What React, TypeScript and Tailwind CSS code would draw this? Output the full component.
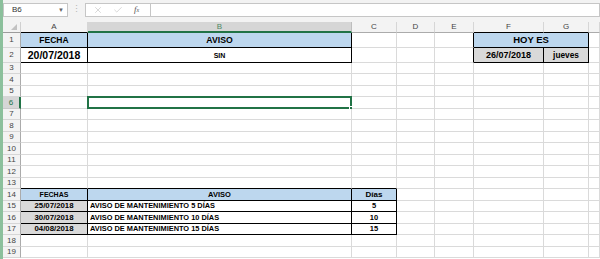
import { X, Check } from "lucide-react";

type CellData = { text: string; cls: string };

const COLS = ["A", "B", "C", "D", "E", "F", "G", "H"];
const ROWS = Array.from({ length: 19 }, (_, i) => i + 1);

const CELLS: Record<string, CellData> = {
  A1: { text: "FECHA", cls: "bg-[#bdd7ee] justify-center text-[8.5px]" },
  B1: { text: "AVISO", cls: "bg-[#bdd7ee] justify-center text-[8.7px]" },
  A2: { text: "20/07/2018", cls: "justify-center text-[10.5px]" },
  B2: { text: "SIN", cls: "justify-center text-[7px]" },
  F1: { text: "HOY ES", cls: "bg-[#bdd7ee] justify-center text-[9.5px]" },
  F2: { text: "26/07/2018", cls: "bg-[#d9d9d9] justify-center text-[9px]" },
  G2: { text: "jueves", cls: "bg-[#d9d9d9] justify-center text-[8.3px]" },
  A14: { text: "FECHAS", cls: "bg-[#bdd7ee] justify-center text-[7px]" },
  B14: { text: "AVISO", cls: "bg-[#bdd7ee] justify-center text-[7.5px]" },
  C14: { text: "Días", cls: "bg-[#bdd7ee] justify-center text-[8px]" },
  A15: { text: "25/07/2018", cls: "bg-[#d9d9d9] justify-center text-[7.8px]" },
  B15: { text: "AVISO DE MANTENIMIENTO 5 DÍAS", cls: "pl-[2px] text-[7.4px]" },
  C15: { text: "5", cls: "justify-center text-[7.5px]" },
  A16: { text: "30/07/2018", cls: "bg-[#d9d9d9] justify-center text-[7.8px]" },
  B16: { text: "AVISO DE MANTENIMIENTO 10 DÍAS", cls: "pl-[2px] text-[7.4px]" },
  C16: { text: "10", cls: "justify-center text-[7.5px]" },
  A17: { text: "04/08/2018", cls: "bg-[#d9d9d9] justify-center text-[7.8px]" },
  B17: { text: "AVISO DE MANTENIMIENTO 15 DÍAS", cls: "pl-[2px] text-[7.4px]" },
  C17: { text: "15", cls: "justify-center text-[7.5px]" },
};

// cells that carry black borders
function boxed(r: number, c: number) {
  if (r >= 1 && r <= 2 && c >= 0 && c <= 1) return true;
  if (r >= 1 && r <= 2 && c >= 5 && c <= 6) return true;
  if (r >= 14 && r <= 17 && c >= 0 && c <= 2) return true;
  return false;
}

function FormulaBar() {
  return (
    <div className="flex h-[22px] items-start gap-0 bg-[#f3f3f3] pt-[3px]">
      <div className="flex h-[14px] w-[65px] items-center justify-between border border-[#c6c6c6] bg-white pl-[8px] pr-[3px] text-[8px] text-[#333]">
        <span>B6</span>
        <span className="text-[6px] text-[#666]">▼</span>
      </div>
      <div className="flex h-[14px] w-[17px] items-center justify-center text-[9px] text-[#b5b5b5]">⋮</div>
      <div className="flex h-[14px] w-[65px] items-center border border-[#c6c6c6] border-r-0 bg-white pl-[6px] text-[#b0b0b0]">
        <X size={10} strokeWidth={1.2} className="ml-[1px]" />
        <Check size={10} strokeWidth={1.2} className="ml-[10px]" />
        <span className="ml-[11px] font-['Liberation_Serif',serif] text-[9px] italic text-[#555]">
          f<span className="text-[6px]">x</span>
        </span>
      </div>
      <div className="h-[14px] flex-1 border border-[#c6c6c6] bg-white" />
    </div>
  );
}

function ColumnHeaders() {
  return (
    <>
      <div className="flex items-end justify-end border-r border-b border-r-[#d0d0d0] border-b-[#9c9c9c] bg-[#f3f3f3] pr-[3px] pb-[2px]">
        <svg width="6" height="6" viewBox="0 0 6 6">
          <polygon points="6,0 6,6 0,6" fill="#c2c2c2" />
        </svg>
      </div>
      {COLS.map((col, c) =>
        c === 1 ? (
          <div
            key={col}
            className="flex items-center justify-center border-r border-b-2 border-r-[#bdbdbd] border-b-[#217346] bg-[#d6d6d6] text-[8px] text-[#4f8a64]"
          >
            {col}
          </div>
        ) : (
          <div
            key={col}
            className={
              "flex items-center justify-center border-r border-b border-r-[#d6d6d6] bg-[#f3f3f3] text-[8px] text-[#444] " +
              (boxed(1, c) ? "border-b-black" : "border-b-[#ababab]")
            }
          >
            {col === "H" ? "" : col}
          </div>
        )
      )}
    </>
  );
}

function SheetRow({ r }: { r: number }) {
  const selected = r === 6;
  return (
    <>
      <div
        className={
          selected
            ? "flex items-center justify-center border-r-2 border-b border-r-[#217346] border-b-[#c8c8c8] bg-[#d6d6d6] text-[8px] text-[#217346]"
            : "flex items-center justify-center border-r border-b border-r-[#ababab] border-b-[#d6d6d6] bg-[#f3f3f3] text-[8px] text-[#444]"
        }
      >
        {r}
      </div>
      {COLS.map((col, c) => {
        if (r === 1 && c === 6) return null;
        const merged = r === 1 && c === 5;
        const right = merged ? true : boxed(r, c) || boxed(r, c + 1);
        const bottom = boxed(r, c) || boxed(r + 1, c);
        const data = CELLS[`${col}${r}`];
        return (
          <div
            key={col}
            className={
              "relative flex min-w-0 items-center overflow-visible whitespace-nowrap border-r border-b font-bold leading-none text-black " +
              (right ? "border-r-black " : "border-r-[#dadada] ") +
              (bottom ? "border-b-black " : "border-b-[#dadada] ") +
              (merged ? "col-span-2 " : "") +
              (data ? data.cls : "")
            }
          >
            {data?.text}
            {selected && c === 1 && (
              <div className="absolute -top-[1px] -left-[1px] -right-[1px] -bottom-[1px] border-2 border-[#217346]">
                <div className="absolute -right-[3px] -bottom-[3px] h-[4px] w-[4px] border border-white bg-[#217346]" />
              </div>
            )}
          </div>
        );
      })}
    </>
  );
}

export default function App() {
  return (
    <div className="flex h-[259px] w-[600px] overflow-hidden bg-white font-['Liberation_Sans',Arial,sans-serif]">
      <div className="w-[3px] shrink-0 bg-[#8cc09c]" />
      <div className="flex min-w-0 flex-1 flex-col">
        <FormulaBar />
        <div className="grid grid-cols-[18px_67px_264px_45px_38px_39px_70px_45px_1fr] grid-rows-[11px_15px_15px_11px_12px_11px_12px_11px_12px_11px_12px_11px_12px_11px_12px_11px_12px_11px_12px_11px]">
          <ColumnHeaders />
          {ROWS.map((r) => (
            <SheetRow key={r} r={r} />
          ))}
        </div>
      </div>
    </div>
  );
}
